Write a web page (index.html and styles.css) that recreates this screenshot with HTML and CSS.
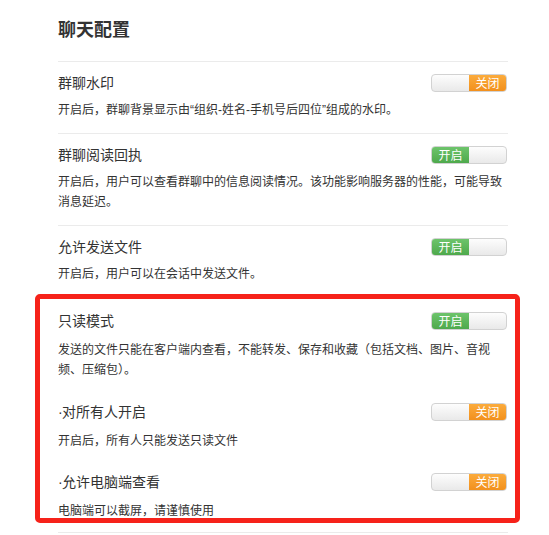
FILE: index.html
```html
<!DOCTYPE html>
<html lang="zh-CN">
<head>
<meta charset="utf-8">
<title>聊天配置</title>
<link rel="stylesheet" href="styles.css">
</head>
<body>
<div class="page">
  <div class="panel">
    <h2 class="heading">聊天配置</h2>

    <div class="row">
      <div class="row-head">
        <span class="row-title">群聊水印</span>
        <span class="toggle toggle-off"><span class="knob"></span><span class="label">关闭</span></span>
      </div>
      <p class="desc">开启后，群聊背景显示由“组织-姓名-手机号后四位”组成的水印。</p>
    </div>

    <div class="row">
      <div class="row-head">
        <span class="row-title">群聊阅读回执</span>
        <span class="toggle toggle-on"><span class="label">开启</span><span class="knob"></span></span>
      </div>
      <p class="desc">开启后，用户可以查看群聊中的信息阅读情况。该功能影响服务器的性能，可能导致消息延迟。</p>
    </div>

    <div class="row">
      <div class="row-head">
        <span class="row-title">允许发送文件</span>
        <span class="toggle toggle-on"><span class="label">开启</span><span class="knob"></span></span>
      </div>
      <p class="desc">开启后，用户可以在会话中发送文件。</p>
    </div>

    <div class="row row-readonly">
      <div class="row-head">
        <span class="row-title">只读模式</span>
        <span class="toggle toggle-on"><span class="label">开启</span><span class="knob"></span></span>
      </div>
      <p class="desc desc-narrow">发送的文件只能在客户端内查看，不能转发、保存和收藏（包括文档、图片、音视频、压缩包）。</p>

      <div class="sub">
        <div class="row-head">
          <span class="row-title"><span class="dot">·</span>对所有人开启</span>
          <span class="toggle toggle-off"><span class="knob"></span><span class="label">关闭</span></span>
        </div>
        <p class="desc">开启后，所有人只能发送只读文件</p>
      </div>

      <div class="sub sub-last">
        <div class="row-head">
          <span class="row-title"><span class="dot">·</span>允许电脑端查看</span>
          <span class="toggle toggle-off"><span class="knob"></span><span class="label">关闭</span></span>
        </div>
        <p class="desc">电脑端可以截屏，请谨慎使用</p>
      </div>

      <div class="highlight"></div>
    </div>
  </div>
</div>
</body>
</html>
```

FILE: styles.css
```css
* { box-sizing: border-box; }

html, body {
  margin: 0;
  padding: 0;
  background: #ffffff;
}

body {
  font-family: "Liberation Sans", "Noto Sans CJK SC", sans-serif;
  color: #333333;
}

.page {
  padding-left: 58px;
}

.panel {
  width: 450px;
}

.heading {
  margin: 0;
  padding: 18px 0 19px;
  font-size: 18px;
  line-height: 24px;
  font-weight: bold;
  color: #333333;
  border-bottom: 1px solid #ebebeb;
}

.row {
  padding: 11px 0 13px;
  border-bottom: 1px solid #ebebeb;
}

.row-head {
  display: flex;
  align-items: center;
  justify-content: space-between;
  height: 20px;
}

.row-title {
  font-size: 14px;
  line-height: 20px;
  color: #333333;
}

.dot {
  display: inline-block;
  width: 4px;
}

.desc {
  margin: 7px 0 0;
  font-size: 12px;
  line-height: 20px;
  color: #333333;
}

.desc-narrow {
  padding-right: 10px;
}

.row-readonly {
  position: relative;
  padding: 13px 0 11px;
}

.row-readonly .desc {
  margin-top: 9px;
}

.sub {
  margin-top: 22px;
}

.sub-last {
  margin-top: 21px;
}

.toggle {
  display: flex;
  width: 76px;
  height: 18px;
  border: 1px solid #d2d2d2;
  border-radius: 4px;
  overflow: hidden;
  margin-right: 1px;
  background: linear-gradient(#fdfdfd, #e9e9e9);
}

.toggle .label {
  width: 37px;
  height: 100%;
  display: flex;
  align-items: center;
  justify-content: center;
  font-size: 12px;
  line-height: 16px;
  color: #ffffff;
  font-family: "Noto Sans CJK SC", sans-serif;
}

.toggle .knob {
  flex: 1;
  height: 100%;
}

.toggle-on .label {
  background: linear-gradient(#6dc46b, #4ea94c);
}

.toggle-off .label {
  background: linear-gradient(#fbab3c, #f2901d);
}

.highlight {
  position: absolute;
  left: -23px;
  right: -12px;
  top: -4px;
  bottom: 9px;
  border: 5px solid #f6221a;
  border-radius: 5px;
  pointer-events: none;
}
```
